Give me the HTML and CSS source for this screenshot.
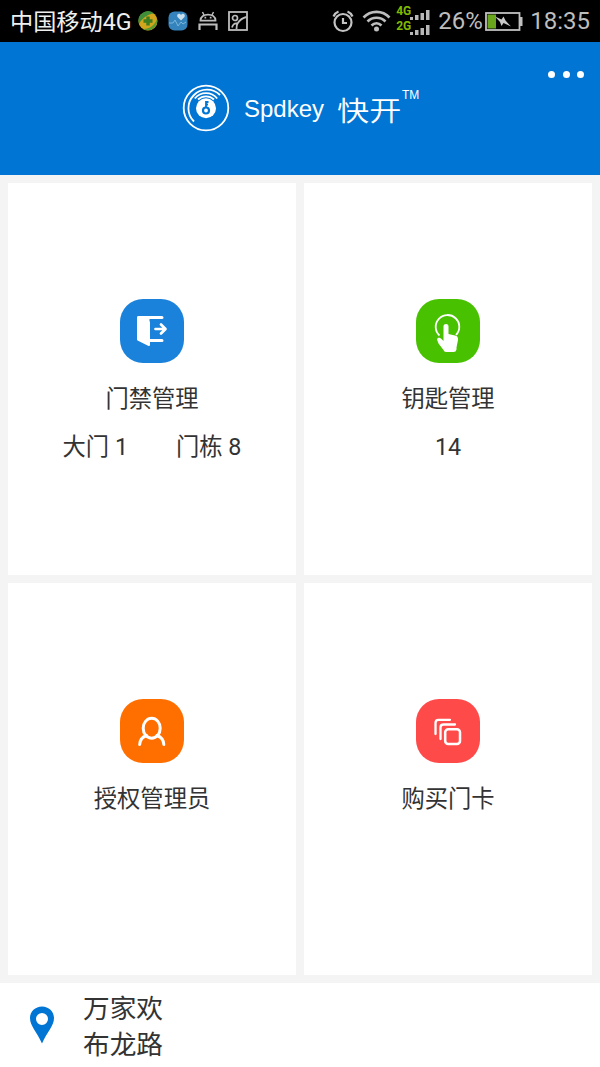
FILE: index.html
```html
<!DOCTYPE html>
<html lang="zh-CN">
<head>
  <meta charset="UTF-8">
  <meta name="viewport" content="width=device-width, initial-scale=1.0">
  <title>Spdkey 快开</title>
  <link rel="stylesheet" href="styles.css">
</head>

<body>
  <div class="status-bar">
    <span class="carrier">中国移动4G</span>
    <div class="notice-icons">
      <svg width="20" height="20" viewBox="0 0 20 20">
        <circle cx="10" cy="10" r="9.5" fill="#d1a51c" />
        <path d="M1 13A9.5 9.5 0 0 1 16 2.5C10 3 4 7 1 13Z" fill="#3f8e3a" />
        <path d="M19 8A9.5 9.5 0 0 1 5 18C12 18 17 14 19 8Z" fill="#5a9830" />
        <path d="M10 5.5V14.5M5.5 10H14.5" stroke="#3b7d21" stroke-width="3.4" />
      </svg>
      <svg width="20" height="20" viewBox="0 0 20 20">
        <rect x="0.5" y="0.5" width="19" height="19" rx="6" fill="#3583bd" />
        <path d="M13 9.5L9.5 6C8 3 11.5 1.5 13 4C14.5 1.5 18 3 16.5 6Z" fill="#c9dfeb" />
        <path d="M1 12H5L7 9L10 15L13 11L15 13L18 11" fill="none" stroke="#7bb6dc" stroke-width="1" />
      </svg>
      <svg width="20" height="20" viewBox="0 0 20 20" fill="none" stroke="#bdbdbd" stroke-width="1.8">
        <path d="M2.5 9.6C2.5 1.5 17.5 1.5 17.5 9.6Z" />
        <path d="M6 4L4.5 1M14 4L15.5 1" stroke-width="1.5" />
        <path d="M1.5 19V13.5H18.5V19" stroke-width="2.2" />
        <path d="M6.5 6.7H8.2M11.8 6.7H13.5" />
      </svg>
      <svg width="20" height="20" viewBox="0 0 20 20" fill="none" stroke="#bdbdbd" stroke-width="1.8">
        <rect x="1" y="1" width="18" height="18" />
        <circle cx="7" cy="7" r="2.5" stroke-width="1.7" />
        <path d="M4 16.5C5 13 7 12 9.5 12.5C11.5 9.5 14 7 18.5 6M9.5 12.5C8.5 14 8.5 16 8.5 18" />
      </svg>
    </div>
    <div class="system-icons">
      <svg class="alarm" width="22" height="23" viewBox="0 0 22 23" fill="none" stroke="#c3c3c3" stroke-width="2.2">
        <circle cx="11" cy="12.5" r="8.5" />
        <path d="M11 8V13H15M1.5 6.5C2.5 4 4 2.5 6.5 1.5M20.5 6.5C19.5 4 18 2.5 15.5 1.5" />
      </svg>
      <svg class="wifi" width="29" height="22" viewBox="0 0 29 22" fill="none" stroke="#bdbdbd" stroke-width="2.6">
        <path d="M1.5 7.5C8.5 0 20.5 0 27.5 7.5M5.5 11.5C10.5 6.5 18.5 6.5 23.5 11.5M9.5 15.5C12.5 12.5 16.5 12.5 19.5 15.5" />
        <circle cx="14.5" cy="19" r="2.5" fill="#bdbdbd" stroke="none" />
      </svg>
      <div class="signals">
        <div class="signal">
          <span>4G</span>
          <svg width="22" height="12" viewBox="0 0 22 12" fill="#b8b8b8">
            <path d="M1 8H4V11H1ZM6 6H9.5V11H6ZM11.5 4H15V11H11.5ZM17 1H20.5V11H17Z" />
          </svg>
        </div>
        <div class="signal">
          <span>2G</span>
          <svg width="22" height="12" viewBox="0 0 22 12" fill="#b8b8b8">
            <path d="M1 8H4V11H1ZM6 6H9.5V11H6ZM11.5 4H15V11H11.5ZM17 1H20.5V11H17Z" />
          </svg>
        </div>
      </div>
      <span class="percent">26%</span>
      <svg class="battery" width="38" height="19" viewBox="0 0 38 19">
        <rect x="1" y="1" width="33.5" height="17" fill="none" stroke="#c0c0c0" stroke-width="1.8" />
        <rect x="2.5" y="2.5" width="8.5" height="14" fill="#69a51d" />
        <rect x="35" y="5" width="2.5" height="9" fill="#c0c0c0" />
        <path d="M10 4.5L16.5 7.5L18.5 4.5L20.5 8.5L26 14.5L18.5 11L16.5 14L15 10Z" fill="#c8c8c8" />
      </svg>
      <span class="clock">18:35</span>
    </div>
  </div>

  <div class="header">
    <div class="brand">
      <svg class="logo" width="48" height="48" viewBox="0 0 48 48" fill="none" stroke="#ffffff" stroke-width="1.8">
        <circle cx="24" cy="24" r="22.3" />
        <path d="M12 37.5A18 18 0 1 1 38 11" />
        <path d="M12.8 14.5A14.5 14.5 0 0 1 35.2 14.5M16 15.5A11.8 11.8 0 0 1 32 15.5" />
        <circle cx="24" cy="24.3" r="10" fill="#ffffff" stroke="none" />
        <circle cx="24" cy="26.5" r="3" stroke="#0075d4" stroke-width="2.2" />
        <path d="M24 24V17M24 18H26.5M24 20.5H26" stroke="#0075d4" />
      </svg>
      <span class="brand-en">Spdkey</span>
      <span class="brand-cn">快开</span>
      <span class="brand-tm">TM</span>
    </div>
    <button class="more" aria-label="更多"><i></i><i></i><i></i></button>
  </div>

  <div class="menu">
    <div class="card">
      <div class="card-icon blue">
        <svg width="64" height="64" viewBox="0 0 64 64" fill="none" stroke="#ffffff" stroke-width="3" stroke-linecap="round" stroke-linejoin="round">
          <path d="M18 18.5L29 23.5V46L18 40.5Z" fill="#ffffff" stroke-width="2" />
          <path d="M18.5 18.5H42M30 41.5H42" />
          <path d="M35.5 30H45M41 25.5L45.5 30L41 34.5" stroke-width="2.7" />
          <path d="M18 19H29V26Z" fill="#ffffff" stroke-width="1" />
        </svg>
      </div>
      <div class="card-title">门禁管理</div>
      <div class="card-info"><span>大门 1</span><span>门栋 8</span></div>
    </div>
    <div class="card">
      <div class="card-icon green">
        <svg width="64" height="64" viewBox="0 0 64 64">
          <path d="M23.5 36.5A11.8 11.8 0 1 1 40 36" fill="none" stroke="#ffffff" stroke-width="1.8" />
          <path d="M27.5 27.5C27.5 24.3 32.5 24.3 32.5 27.5V35L39 36.5C41.5 37 42.3 38.5 42 41L40.5 48.5V50.5Q40 53 37.5 53H30Q28 53 27.5 51L22.5 44.5L21 40.5C21.5 38 24 38.5 25.5 40L27.5 42Z" fill="#ffffff" />
        </svg>
      </div>
      <div class="card-title">钥匙管理</div>
      <div class="card-info"><span>14</span></div>
    </div>
    <div class="card">
      <div class="card-icon orange">
        <svg width="64" height="64" viewBox="0 0 64 64" fill="none" stroke="#ffffff" stroke-width="3" stroke-linecap="round">
          <ellipse cx="31.7" cy="29.2" rx="8.5" ry="10" />
          <path d="M26.5 36.5C22 38 20 41 19.7 45.5M37 36.5C41.5 38 43.5 41 43.8 45.5" />
        </svg>
      </div>
      <div class="card-title">授权管理员</div>
    </div>
    <div class="card">
      <div class="card-icon red">
        <svg width="64" height="64" viewBox="0 0 64 64" fill="none" stroke="#ffffff" stroke-width="2.3" stroke-linecap="round">
          <path d="M19.5 35V24Q19.5 20.8 22.5 20.8H34" />
          <path d="M24.5 40V28.5Q24.5 25.5 27.5 25.5H39" />
          <rect x="29.2" y="30.2" width="14.8" height="14.8" rx="3" stroke-width="2.5" />
        </svg>
      </div>
      <div class="card-title">购买门卡</div>
    </div>
  </div>

  <div class="footer">
    <svg class="pin" width="24" height="38" viewBox="0 0 24 38">
      <path fill-rule="evenodd" d="M12 0.5C5.3 0.5 0 5.5 0 12C0 20 7 26 12 37.5C17 26 24 20 24 12C24 5.5 18.7 0.5 12 0.5ZM12 7A6 6 0 1 1 12 19A6 6 0 1 1 12 7Z" fill="#0075d4" />
    </svg>
    <div class="address">
      <div>万家欢</div>
      <div>布龙路</div>
    </div>
  </div>
</body>
</html>
```

FILE: styles.css
```css
/* 颜色变量定义 */
:root {
  --primary-color: #0075d4;
  --bg-color: #f4f4f4;
  --card-bg: #ffffff;
  --text-color: #333333;
}

/* 基础样式 */
* {
  margin: 0;
  padding: 0;
  box-sizing: border-box;
}

body {
  display: flex;
  flex-direction: column;
  height: 1067px;
  overflow: hidden;
  font-family: Roboto, 'Noto Sans CJK SC', sans-serif;
  background-color: var(--bg-color);
  color: var(--text-color);
}

svg {
  display: block;
  flex-shrink: 0;
}

/* 状态栏 */
.status-bar {
  display: flex;
  align-items: center;
  height: 42px;
  padding: 0 10px;
  background-color: #000000;
  color: #bdbdbd;
  white-space: nowrap;
}

.carrier {
  width: 128px;
  padding-top: 3px;
  font-size: 23.2px;
  line-height: 39px;
  color: #efefef;
}

.notice-icons {
  display: flex;
  gap: 10px;
}

.system-icons {
  display: flex;
  align-items: center;
  margin-left: auto;
  font-size: 24px;
  line-height: 42px;
}

.wifi {
  margin-left: 8px;
}

.signals {
  margin: 0 7px 0 5px;
}

.signal {
  display: flex;
  align-items: flex-end;
  height: 15px;
  font-size: 12px;
  font-weight: bold;
  line-height: 15px;
  color: #82b900;
}

.signal span {
  width: 13px;
  padding-bottom: 2px;
}

.percent {
  width: 47px;
}

.clock {
  margin-left: 7px;
}

/* 标题栏 */
.header {
  position: relative;
  height: 133px;
  padding-top: 42px;
  background-color: var(--primary-color);
  color: #ffffff;
}

.brand {
  display: flex;
  align-items: center;
  height: 48px;
  padding-left: 182px;
}

.brand-en {
  width: 93px;
  margin-left: 14px;
  padding-top: 2px;
  font-family: 'Liberation Sans', sans-serif;
  font-size: 24px;
}

.brand-cn {
  width: 65px;
  padding-top: 2px;
  font-family: 'Noto Sans CJK SC', sans-serif;
  font-size: 27px;
  font-weight: 350;
  white-space: nowrap;
  transform: scaleX(1.19);
  transform-origin: left;
}

.brand-tm {
  align-self: flex-start;
  margin-top: 4px;
  margin-left: -1px;
  padding-left: 1px;
  font-family: 'Liberation Sans', sans-serif;
  font-size: 12px;
}

.more {
  position: absolute;
  top: 22px;
  right: 12px;
  display: flex;
  gap: 7.5px;
  padding: 7px 4px;
  border: none;
  background: transparent;
}

.more i {
  width: 7px;
  height: 7px;
  border-radius: 50%;
  background-color: #ffffff;
}

/* 功能菜单 */
.menu {
  display: grid;
  grid-template-columns: 1fr 1fr;
  grid-template-rows: 392px 392px;
  gap: 8px;
  padding: 8px;
}

.card {
  display: flex;
  flex-direction: column;
  align-items: center;
  padding-top: 116px;
  background-color: var(--card-bg);
  font-size: 23.3px;
  line-height: 30px;
}

.card-icon {
  width: 64px;
  height: 64px;
  border-radius: 23px;
}

.blue {
  background-color: #1a82da;
}

.green {
  background-color: #48c100;
}

.orange {
  background-color: #ff6f00;
}

.red {
  background-color: #ff4a4a;
}

.card-title {
  margin-top: 21px;
}

.card-info {
  display: flex;
  gap: 48px;
  margin-top: 18px;
}

/* 底部地址 */
.footer {
  display: flex;
  align-items: center;
  flex: 1;
  padding-left: 30px;
  background-color: var(--card-bg);
}

.address {
  margin-left: 29px;
  margin-top: 4px;
  font-size: 26.7px;
  line-height: 36px;
}
```
